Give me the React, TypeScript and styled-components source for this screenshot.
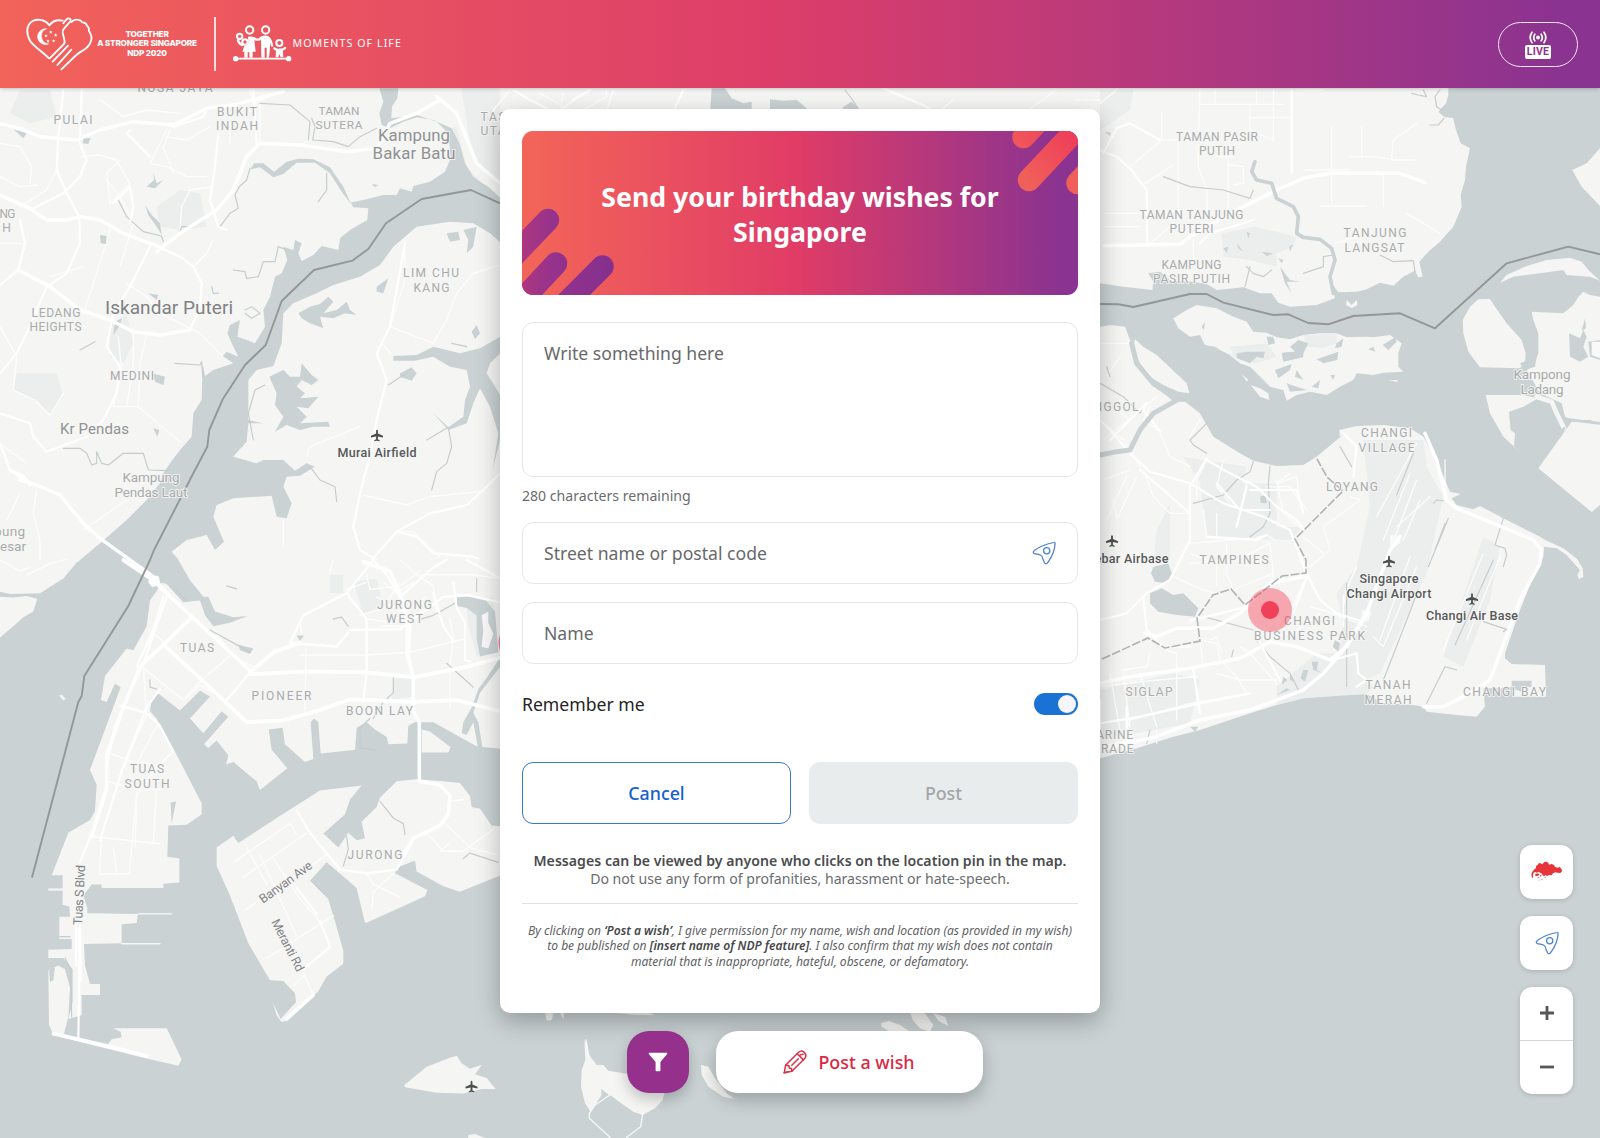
import React from "react";
import styled, { createGlobalStyle } from "styled-components";

const Global = createGlobalStyle`
  *, *::before, *::after { box-sizing: border-box; }
  body {
    margin: 0;
    font-family: "Noto Sans", "Open Sans", sans-serif;
    background: #cad2d3;
    overflow: hidden;
  }
  button, input, textarea { font: inherit; }
`;

/* ------------------------------------------------------------------ map */

type Sheet = {
  id: string;
  transform: string;
  land?: string[];
  park?: string[];
  water?: string[];
  stream?: string[];
  minor?: string[];
  medium?: string[];
  major?: string[];
  isle?: string[];
};

const sheets: Sheet[] = [
  {
    id: "johor-west",
    transform: "translate(0 80) scale(.33333)",
    land: ["0,0 1530,0 1530,1445 0,1445"],
    park: [
      "50,880 170,880 190,950 150,1005 110,960 40,930",
      "1380,0 1500,0 1500,320 1440,260 1410,190",
      "1330,150 1370,140 1400,260 1440,300 1390,280",
      "540,330 600,340 620,440 540,450 480,440 470,380",
      "330,740 380,700 400,790 370,850 330,830",
      "60,30 150,30 170,110 90,130 30,100",
    ],
    water: [
      "1510,362 1470,325 1420,290 1395,250 1378,190 1355,145 1300,120 1250,112 1210,125 1170,145 1145,135 1138,100 1150,65 1138,25 1195,25 1192,55 1176,80 1174,115 1200,112 1250,105 1310,125 1345,160 1352,235 1335,275 1290,305 1240,318 1235,335 1200,325 1190,345 1150,345 1100,358 1050,368 1025,335 990,280 945,248 890,248 850,282 820,292 780,262 752,268 762,250 790,250 822,275 860,245 895,236 940,238 990,262 1030,320 1050,365 1060,382 1105,385 1102,420 1050,450 1020,475 1015,510 965,498 940,525 905,543 895,520 905,490 885,480 880,510 850,500 862,540 845,580 825,590 810,650 790,690 795,740 765,790 740,780 712,770 720,720 690,735 682,760 700,800 715,830 680,815 668,828 700,850 640,870 615,888 608,850 605,960 580,1000 575,1070 540,1110 510,1150 490,1180 480,1210 440,1260 380,1320 300,1390 240,1440 235,1446 535,1446 545,1450 515,1415 560,1380 620,1365 645,1410 672,1385 640,1310 650,1275 700,1255 815,1247 830,1310 860,1315 875,1270 850,1220 860,1190 900,1187 945,1160 920,1150 885,1172 850,1140 790,1140 770,1150 700,1130 690,1140 740,1085 745,1030 790,1030 745,1020 745,900 770,870 820,858 845,790 850,700 880,670 950,640 1000,615 1080,590 1140,555 1180,500 1250,440 1350,425 1420,430 1470,460 1510,495",
      "895,700 930,680 960,672 985,650 1000,665 970,700 1010,690 1040,665 1050,690 1070,705 1035,700 1000,715 960,710 970,745 930,730 905,715",
      "808,890 850,870 870,890 900,890 905,850 935,885 955,900 935,915 905,900 890,920 915,940 900,955 955,950 925,985 890,980 920,1010 900,1030 985,1025 990,1040 940,1040 900,1050 860,1035 825,1055 850,1010 825,975 830,940",
      "1510,765 1440,805 1380,820 1300,800 1250,825 1180,828 1180,842 1245,842 1300,830 1350,860 1400,870 1410,920 1395,960 1390,1010 1345,1042 1300,1000 1345,1050 1400,1030 1420,970 1440,925 1470,980 1495,1060 1478,1170 1495,1100 1510,1030 1510,960 1460,880 1470,850 1510,810",
      "1200,880 1235,862 1250,880 1235,902 1200,890",
      "1430,735 1440,760 1425,778 1415,755",
      "1340,460 1375,455 1380,480 1350,485",
      "1390,450 1430,440 1420,500 1400,520 1405,480",
      "1130,620 1165,595 1150,640 1130,635",
      "640,1240 655,1230 650,1265 625,1270 610,1240 625,1245",
      "440,320 462,300 460,280 470,310 490,300 465,325",
      "435,375 455,405 480,430 485,465 470,440 445,405",
      "300,465 320,468 318,492 302,490",
      "445,640 475,645 470,660",
      "455,880 495,890 490,915 465,905",
      "40,148 80,160 70,175",
      "250,175 272,175 265,192 248,190",
      "345,725 365,715 360,735 340,765",
      "460,1045 478,1050 472,1070",
      "1115,312 1135,315 1125,322",
    ],
    stream: [
      "935,115 945,140 938,180 1000,185 1045,200 1080,170 1130,145",
      "355,360 380,410 430,455 485,468 490,485",
      "750,265 740,300 718,320 705,345 715,385 690,400 660,440",
      "860,510 835,500 825,545 790,545 775,590 740,595 735,575 700,570",
      "980,280 980,330 955,365",
      "780,70 870,75 930,125 925,180",
      "190,1105 240,1105 260,1120 275,1155 290,1150 290,1115 305,1150 325,1155 370,1120 430,1120 445,1170 500,1172",
      "525,850 600,855 605,845 608,890",
      "795,915 765,930 745,1000 760,1080",
      "1280,1080 1345,1042 1355,1100 1340,1150 1310,1175 1295,1230",
      "535,470 545,440 580,440",
      "1165,915 1210,885",
      "240,810 285,785",
      "735,690 755,680 780,700 755,715 735,700",
      "635,620 640,640 655,640",
      "930,1160 960,1200 1005,1220 1010,1265",
      "1355,790 1400,800",
    ],
    minor: [
      "0,290 60,320 110,315", "0,190 60,200 95,260 90,310", "170,270 140,330 60,380",
      "245,230 300,225 350,240 390,310 330,370 320,280 360,240", "320,300 360,350 400,430 360,560",
      "330,450 290,580 250,700", "100,960 40,930 50,830 0,740", "190,940 150,1005 110,965",
      "380,610 440,650 480,700 600,760 670,830", "400,760 400,850 380,980", "355,770 365,870 340,980",
      "440,760 420,850 415,980 540,1085", "340,980 415,980", "500,150 450,250 500,260 560,290 620,290",
      "510,150 490,200 520,280", "630,140 560,180 500,170", "780,70 780,190", "930,180 910,190", "690,130 690,190",
      "540,450 545,380 570,330 640,320", "580,560 620,520 640,480", "0,490 60,490", "150,590 250,560",
      "1215,480 1215,600 1170,740", "1500,555 1420,580 1370,640 1340,720 1300,790 1170,740",
      "1140,780 1170,820", "0,1090 80,1150", "110,1230 100,1300 120,1380 120,1440", "60,1240 20,1320",
      "1090,1245 1220,1275 1290,1250 1440,1235", "250,1350 380,1260", "920,1130 930,1100 1080,1040",
      "850,1320 850,1400", "1190,1355 1240,1355 1320,1430 1280,1445", "530,1410 610,1270",
      "750,30 760,70 850,30", "300,60 370,110 440,90 540,100",
    ],
    medium: [
      "190,30 175,170 170,270 200,340 238,410 240,490 200,580 140,620 80,760 50,820 0,880",
      "245,30 240,190 260,240 240,290 190,340 130,370 90,390", "60,420 75,490 55,570 0,615",
      "655,160 645,260 630,360 655,440 680,450", "760,30 770,190", "390,430 400,380 390,320 340,370",
      "450,500 390,620 340,700 320,800 360,860 350,940 310,1020 260,1070 140,1115 100,1070 90,1030 0,1000",
      "450,230 380,160 390,150", "570,750 600,680 605,610 580,560 540,530 450,490",
      "0,1090 30,1170 70,1200", "1215,490 1170,740 1130,820 1160,900 1130,1020 1110,1130 1080,1240 1060,1340 1080,1410 1130,1440",
      "1500,1180 1450,1230 1400,1275 1290,1300 1190,1355 1110,1445",
      "1190,1355 1250,1370 1300,1420 1420,1430 1500,1470", "620,90 610,110 520,140",
    ],
    major: [
      "0,130 60,145 120,170 230,180 300,150 400,125 520,135 620,85 700,75 850,35",
      "0,345 90,385 140,420 200,420 240,410 300,420 370,460 450,490 490,505",
      "470,515 540,460 650,390 700,330 740,230 780,190 900,195 1040,215 1130,205 1170,130 1250,100 1320,60",
      "55,570 150,620 240,690 330,720 400,755 480,765 570,750",
      "1310,50 1370,100 1410,200 1430,250 1500,310",
      "60,1200 110,1215 180,1245 250,1330 300,1375 460,1490",
      "30,1170 70,1190 90,1215",
    ],
  },
  {
    id: "tuas",
    transform: "translate(0 560) scale(.33333 .36862)",
    land: [
      "0,-2 238,-2 190,50 120,90 30,92 0,86",
      "0,100 40,102 80,98 112,105 100,140 70,155 40,180 0,210",
      "534,-2 570,55 610,100 625,100 645,140 700,155 742,152 690,170 640,180 615,150 600,110 575,112 550,115 500,65 482,62 470,85 450,110 440,180 400,245 380,240 315,315 303,380 320,385 345,335 362,345 270,570 290,610 285,680 270,705 205,740 155,855 188,855 188,935 208,940 210,968 178,968 178,1028 215,1028 215,1055 145,1057 145,1080 190,1080 218,1110 218,1200 205,1245 245,1235 245,1180 300,1180 300,1150 270,1150 255,1100 252,1042 365,1040 365,988 410,985 414,960 262,958 262,945 250,910 275,880 305,880 305,890 490,890 490,878 538,875 538,810 502,805 505,720 560,718 605,690 605,660 525,520 470,430 450,410 455,375 475,362 540,408 600,355 630,370 570,430 610,470 665,410 685,425 612,500 625,510 650,490 685,530 678,555 700,548 770,600 780,624 862,565 815,515 806,460 848,455 855,500 915,548 940,540 932,440 942,430 955,440 962,525 1065,515 1070,455 1100,440 1125,460 1160,480 1165,500 1222,498 1225,450 1245,440 1300,440 1430,505 1530,515 1530,-2",
      "1265,460 1290,465 1352,508 1345,522 1265,522",
      "145,1112 175,1100 195,1110 210,1160 205,1240 190,1292 160,1288 147,1260",
      "650,780 700,748 715,768 830,700 960,625 1085,612 1050,650 1035,690 970,742 1015,780 1045,740 1070,760 1095,755 1085,710 1130,670 1140,645 1190,600 1250,595 1330,600 1380,605 1410,640 1415,670 1440,675 1475,720 1530,725 1530,845 1380,900 1330,885 1250,845 1245,815 1190,835 1185,850 1282,895 1275,912 1105,982 1095,985 1070,890 980,820 930,870 985,920 1005,980 1030,1060 1030,1095 980,1130 955,1170 860,1250 845,1253 830,1235 818,1200 842,1245 888,1200 885,1175 850,1142 810,1140 745,1040 690,910 650,830",
      "150,1285 235,1300 320,1318 335,1300 365,1295 362,1280 340,1270 500,1270 545,1355 535,1372 430,1350 235,1306",
      "1212,1425 1280,1375 1350,1350 1370,1345 1385,1365 1410,1380 1445,1370 1425,1395 1460,1405 1487,1435 1445,1435 1390,1447 1310,1445 1215,1430",
      "178,368 185,365 197,377 190,381",
      "1405,1560 1425,1557 1455,1568 1405,1568",
      "145,891 190,891 190,897 145,897",
    ],
    park: [
      "1400,130 1480,100 1495,250 1430,260 1405,180",
      "1180,320 1235,320 1240,370 1175,380",
      "1060,60 1130,50 1150,130 1090,150",
      "990,40 1030,40 1030,90 990,90",
    ],
    water: [
      "1370,102 1410,98 1450,102 1485,140 1495,250 1440,262 1430,215 1430,150 1400,130 1370,125",
      "1500,265 1460,320 1435,350 1415,400 1390,440 1385,470 1400,475 1420,440 1435,515 1448,512 1435,440 1420,415 1440,360 1500,290",
      "1082,455 1100,450 1128,480 1128,522 1090,522",
      "512,658 528,655 515,715",
      "890,205 912,205 900,220",
      "715,230 760,240 750,255 720,245",
      "1240,442 1250,442 1250,520 1226,520 1226,450",
      "195,1270 230,1245 232,1295 200,1288",
      "147,1110 165,1105 160,1140 150,1145",
    ],
    isle: ["1445,150 1465,140 1465,170 1480,200 1465,240 1445,235 1450,190"],
    stream: [
      "1265,160 1300,150 1370,115", "1180,320 1180,360 1150,385 1120,430", "1430,50 1430,85",
      "520,75 560,110", "630,190 700,225 750,250", "680,70 710,78", "1140,655 1180,700 1210,715 1215,745",
      "1390,810 1410,795 1495,820", "1340,280 1420,345", "450,325 450,345 470,350", "195,1080 212,1110 215,1240",
      "1000,160 1025,155 1045,180", "1040,750 1045,785 1030,830",
      "1110,430 1080,455 1080,510 1130,515",
      "180,1022 210,1022",
    ],
    minor: [
      "415,960 515,960", "365,1041 480,1041",
      "900,258 1100,258 1230,250 1390,215", "918,240 915,420", "575,155 500,225", "690,260 600,330 550,380", "640,190 700,260 760,290",
      "420,285 550,380 600,340 660,370", "450,190 500,230", "330,525 390,545 500,560", "520,520 460,570",
      "305,750 298,852 388,852 410,630", "470,620 460,765", "275,750 480,770", "320,600 420,625 490,620",
      "430,290 440,420 400,500 350,610", "470,450 430,520 400,570",
      "700,820 870,715 890,745", "730,860 920,740", "780,800 890,1020", "800,1080 1000,965", "820,810 900,920 960,980 990,1040",
      "735,950 800,910 980,800", "740,780 800,880", "910,1120 940,1180", "880,1155 910,1130", "1100,850 1120,880 1200,915", "1180,850 1120,900 1115,950",
      "1280,740 1330,790 1390,790 1480,730", "1330,710 1410,780 1490,800", "1350,655 1390,650", "1320,790 1345,770",
      "1100,40 1110,80 1200,70 1260,30", "1130,100 1200,140 1280,100", "1200,0 1250,40 1300,70 1310,150", "1140,180 1220,180 1230,120",
      "1350,160 1360,210 1350,290 1350,400", "1080,150 1150,130 1200,60", "1040,80 1100,60", "1150,60 1190,90 1240,60", "1100,160 1180,170 1220,130", "1260,40 1330,40 1420,40 1500,50",
      "905,200 900,170", "1000,0 990,30", "480,550 410,640 405,780", "340,780 350,850",
      "80,40 150,10 200,-2", "0,0 60,30 90,20",
    ],
    medium: [
      "1120,0 1040,90 910,150 870,225 1010,235 1050,190 1200,188 1330,100 1400,95 1500,115",
      "1040,90 1100,160 1100,300 1090,385", "1120,0 1160,40 1220,130 1220,260 1240,320",
      "755,300 680,380", "500,100 430,280 345,450 320,560 320,610 280,730 240,820",
      "480,350 440,400 370,560 300,760", "1360,60 1370,130 1395,170 1395,270 1410,275",
      "360,395 440,415 480,450 520,520", "890,680 930,740 1020,840 1100,850 1190,840 1240,760",
      "490,100 460,190 410,290", "1200,100 1300,20 1340,0", "960,980 990,1050 910,1110",
      "890,890 950,960", "1400,0 1500,50", "1300,90 1330,180 1360,220",
      "240,990 235,1300", "228,990 228,1100",
    ],
    major: [
      "370,0 460,55 500,90 750,300", "750,305 820,250 900,225",
      "490,230 600,320 740,440 850,435 950,410 1050,378 1240,385 1370,380 1500,410",
      "750,310 920,302 1100,305 1240,318 1400,290 1500,265",
      "1240,320 1240,410 1258,440 1258,600 1320,610 1350,640 1345,690 1320,720 1240,755 1200,810",
      "490,230 420,290 370,400 320,530 320,620 275,750",
      "238,1000 240,1140", "570,160 490,230", "160,1285 320,1318 440,1345", "860,1245 940,1180",
      "1090,5 1170,30 1200,90 1230,180 1225,260 1240,320",
      "452,48 472,48 475,62 458,68 450,58",
    ],
  },
  {
    id: "johor-east",
    transform: "translate(1090 80) scale(.33333)",
    land: [
      "-1770,0 1075,0 1075,45 1068,70 1045,95 1062,110 1090,115 1098,150 1112,190 1140,205 1128,260 1125,300 1112,345 1115,380 1090,440 1050,485 1015,515 988,545 998,590 985,592 975,572 940,590 910,617 870,608 830,628 800,635 745,637 725,610 735,655 680,675 600,680 565,668 545,640 510,640 460,622 380,630 350,612 310,605 190,600 187,630 100,620 30,610 -30,605 -1770,600",
      "250,715 290,690 320,675 380,685 430,710 470,725 490,755 530,758 560,772 600,778 640,765 690,760 740,760 770,772 830,770 850,772 900,765 935,790 925,820 925,860 940,875 880,878 850,885 800,880 790,900 750,920 710,945 660,935 620,945 590,962 580,930 540,920 500,880 480,860 450,850 420,825 390,810 375,800 345,795 330,765 300,770 265,745",
      "482,915 510,925 535,940 538,960 510,950",
      "455,882 475,900 470,905", "895,900 920,900 925,907",
      "770,660 785,675 800,660 802,675 785,684 768,675",
      "1165,658 1200,657 1215,680 1250,730 1295,780 1307,820 1305,850 1290,865 1170,862 1135,815 1120,760 1118,720 1140,680",
      "1325,695 1420,700 1450,675 1465,650 1480,635 1500,645 1530,650 1530,1030 1500,1020 1450,1020 1425,1010 1415,970 1350,940 1310,870 1330,860 1345,820 1345,760 1330,720",
      "1230,608 1250,585 1310,558 1370,540 1440,533 1475,545 1495,570 1530,602 1500,590 1430,585 1420,570 1350,580 1270,590",
      "1530,205 1490,250 1447,270 1475,320 1530,378",
      "1187,945 1300,945 1345,955 1300,980 1257,995 1262,1050 1275,1060 1272,1100 1300,1125 1240,1070 1200,1000",
    ],
    park: [
      "395,460 495,440 620,470 610,500 560,520 560,560 480,540 400,530",
      "640,765 740,762 740,790 700,805 650,800",
      "420,800 530,790 560,830 500,850 430,830",
      "30,30 130,30 120,90 30,150",
    ],
    water: [
      "440,820 470,815 525,815 520,835 500,830 480,850 440,835",
      "530,770 550,770 555,790 535,795", "575,818 640,812 640,832 580,845",
      "680,838 745,815 742,840 700,850", "555,870 605,852 600,870 565,895",
      "878,795 915,772 920,785 895,810", "835,808 850,800 855,815", "665,920 690,900 685,925",
      "720,885 735,885 730,900", "600,800 625,780 655,790 640,820 615,815",
      "740,790 760,775 755,800 735,805", "335,740 345,725 342,750",
      "590,910 620,920 650,930 600,935", "620,870 640,900 615,890",
      "1437,760 1470,775 1480,750 1490,770 1480,800 1495,830 1470,845 1440,830",
      "1485,715 1488,745 1475,752", "1495,785 1530,780 1530,840 1500,830", "1290,850 1340,830 1335,860 1300,870",
      "470,455 480,460 475,475", "440,490 460,515 445,505", "515,515 550,520 530,528", "565,535 580,540 575,550",
      "570,560 600,600 630,605 590,605 605,640 585,610", "400,505 415,500 410,518", "610,492 600,515 598,500",
      "45,155 62,158 60,168", "175,580 210,575 240,600 190,605",
      "-1135,25 -1095,25 -1075,55 -1040,70 -1015,65 -1015,100 -1140,100",
      "-960,58 -920,62 -880,60 -850,85 -850,100 -960,100",
      "-740,80 -715,65 -690,90 -690,100 -750,100",
    ],
    isle: ["1505,785 1530,785 1530,835 1505,825"],
    stream: [
      "965,40 985,45 1010,50 1000,30", "1050,30 1035,50 1040,80 1055,90",
      "1020,135 1045,135 1062,115", "470,560 490,580 520,590 545,570", "480,560 465,620",
      "730,525 700,530 700,560 640,580", "490,330 480,355 400,330 300,320 220,290", "870,525 910,545 970,542 975,575",
      "-735,30 -712,60 -690,95",
    ],
    minor: [
      "330,30 325,180 325,260 350,330 352,390", "330,73 580,73", "375,30 375,73", "480,73 480,150 550,180", "550,30 550,180", "480,113 600,113",
      "265,190 265,390", "210,180 360,180", "415,200 415,400", "380,230 430,230 430,190", "500,30 500,73",
      "645,270 780,270", "725,140 725,370", "780,230 860,230 910,240 975,240", "905,240 910,180 980,130", "690,378 830,378", "880,280 880,380", "815,140 815,230",
      "45,400 160,400 280,390", "45,440 150,440", "215,100 215,180 120,260", "165,310 250,255", "310,480 310,540",
      "180,490 240,440 370,440", "950,400 1050,460", "735,490 800,470", "420,255 460,260 460,310 430,315",
      "30,70 80,30", "620,30 700,30", "-1650,40 -1560,90", "-1580,40 -1590,100", "-1790,90 -1740,30",
      "-1430,30 -1450,90", "-460,100 -410,60", "-200,100 -100,30", "-50,60 30,60", "-1530,95 -1450,50 -1450,30",
    ],
    medium: [
      "30,210 80,230 120,265 170,330 172,490", "80,145 120,130 210,180", "40,220 80,145",
      "605,30 605,280", "330,490 360,460 490,420", "-1730,30 -1680,60 -1600,100 -1550,60 -1500,30",
      "-630,20 -480,85", "-1250,95 -1220,30",
    ],
    major: [
      "42,497 270,493 300,470 370,430 480,370 560,330 640,295 720,280 930,280 1005,308",
    ],
  },
  {
    id: "changi",
    transform: "translate(1090 440) scale(.33333)",
    land: [
      "-30,-330 30,-340 60,-345 105,-340 120,-300 130,-250 180,-180 235,-130 250,-115 285,-115 330,-80 350,-45 370,-10 450,40 490,62 560,78 640,75 680,50 740,0 765,-20 750,-10 748,-30 800,-42 880,-45 960,-35 1000,-10 1040,60 1065,120 1080,155 1112,162 1085,175 1100,195 1150,208 1170,198 1250,240 1350,290 1370,302 1420,325 1462,358 1478,385 1480,410 1467,418 1462,405 1470,390 1430,345 1400,325 1362,320 1360,350 1330,410 1290,510 1245,640 1245,655 1265,672 1365,675 1368,770 1270,770 1265,740 1235,745 1180,745 1185,800 1160,830 1100,825 1010,815 1000,800 970,795 880,790 830,762 730,765 640,775 560,795 480,820 330,870 250,890 140,925 30,955 -30,965",
      "135,-302 160,-280 200,-255 290,-170 298,-140 265,-145 220,-165 180,-190 150,-230 128,-270",
      "1445,-55 1530,-55 1530,195 1505,216 1345,85",
      "1250,-5 1300,45 1275,20 1255,0",
    ],
    park: [
      "820,0 1000,0 1010,80 1060,170 1010,400 870,700 780,740 740,660 760,560 740,460 800,380 840,200",
      "560,740 680,640 780,640 850,740 830,762 640,775 560,795",
      "1180,290 1230,320 1200,480 1120,680 1060,650",
      "200,270 240,190 240,360 190,370",
      "280,50 470,80 440,180 520,230 520,280 440,290",
      "30,750 250,700 330,720 300,850 30,900",
      "330,130 560,130 560,260 640,260 600,300 350,290",
    ],
    water: [
      "190,380 235,370 245,400 230,430 195,425 183,400",
      "180,460 215,445 250,465 280,460 325,505 315,530 260,525 205,515 180,490",
      "1265,722 1325,722 1325,740 1300,742 1295,755 1265,745",
      "510,170 528,165 530,190 512,188", "735,600 750,610 745,635 728,620",
      "300,860 325,860 315,875",
      "600,700 612,725 600,720", "640,690 655,690 645,725 632,715", "665,665 685,665 680,690 700,700 670,690",
      "560,765 590,745 600,750", "580,710 592,720 575,735",
    ],
    stream: [
      "490,65 480,95 440,120 400,165 310,190", "540,78 535,130 540,220 520,260 480,290",
      "1240,235 1215,315 1245,325 1250,345 1240,380", "1075,235 1015,380", "1065,250 1035,330", "1030,190 1040,180 1060,182",
      "880,720 900,670 985,450", "1100,690 1065,680 1060,690 1010,790", "1210,360 1095,615", "970,40 920,165",
      "1180,545 1250,568 1240,575", "750,20 785,80", "500,600 540,650 600,700 625,750", "340,530 490,570",
      "350,-50 300,0 310,15 350,40", "30,-170 100,-130 150,-80 160,-100", "50,-220 60,-190",
      "770,430 770,740", "180,870 170,910", "430,630 425,650",
    ],
    minor: [
      "160,90 190,170 240,220 300,220", "210,-20 240,50 300,80", "350,60 320,120 320,180", "560,120 580,220 640,270", "530,140 600,140 640,200",
      "400,60 380,140 420,190", "470,130 440,260", "340,210 350,290", "380,220 380,290", "410,310 410,400 430,450", "440,360 540,310 550,400 430,450",
      "300,310 420,300 490,295 530,285 555,300", "300,340 380,370 380,440", "250,410 340,450 375,460", "550,400 540,460", "300,370 410,360",
      "620,360 660,380 720,330 700,260 810,180 780,170", "640,290 700,340", "560,130 620,110 630,180 650,210", "600,100 560,130",
      "40,120 120,90", "50,240 110,110", "80,240 140,110", "70,180 80,230", "180,640 170,680 100,690", "230,630 260,640 260,840",
      "340,690 330,600 380,610 390,660", "30,740 200,720 320,710", "60,700 90,870", "100,700 120,860", "150,700 200,860", "400,670 440,710 470,760", "380,700 450,720 560,720",
      "200,870 200,910", "100,900 120,840 300,790 470,760", "450,620 480,640 560,730", "540,600 620,570 690,520",
      "590,540 640,430", "660,500 730,520 830,560", "800,380 760,470 760,560", "860,230 980,10", "880,300 960,100", "980,120 900,330",
      "960,350 870,600", "850,590 880,620 980,380", "990,180 940,300", "1180,340 1060,630", "1230,350 1130,600",
      "1020,170 920,260", "30,-60 100,0 150,80", "30,-290 130,-290", "90,-250 50,-190", "200,-130 40,0", "120,-60 60,-110",
      "330,-60 300,-10", "180,-100 160,-60 190,-40",
      "360,600 380,590 395,640", "760,500 770,450", "1065,60 1065,150",
    ],
    medium: [
      "0,-90 60,-30 130,50 180,95 300,130 400,190 520,230 600,270 650,400 690,480 740,520 820,545",
      "350,55 300,140 300,300 240,420 170,460 110,520 30,540", "160,470 170,570 220,620 300,620",
      "350,60 420,100 500,140 560,200 620,240 640,265", "210,-25 160,-90 170,-110 60,0", "650,410 610,520",
      "30,850 150,830 330,790 480,760", "310,690 330,820", "30,780 30,920 140,900", "110,800 110,900", "150,90 220,150 300,220",
      "380,130 450,210 540,210", "500,590 570,720", "470,140 440,260", "790,110 800,20 760,-20", "350,290 500,300 530,285",
      "730,660 800,640 805,700 830,720 800,740", "480,150 620,150 640,220", "300,540 350,530 470,500",
    ],
    major: [
      "30,730 120,710 300,685 450,655 540,605 620,620 720,660 770,620 830,520",
      "30,930 200,890 330,840 480,810 640,750 700,700 760,630 830,520 900,330 930,290",
      "1005,-20 1040,60 1070,180 1100,205 1330,300 1355,330 1350,370 1290,480 1230,640 1200,720 1120,770 1060,800 1000,800",
      "165,580 200,590 260,565 370,565 450,520 540,430 640,410",
    ],
    isle: ["900,285 935,290 930,310 900,330", "815,510 845,515 835,545 815,540"],
  },
  {
    id: "southern-isles",
    transform: "translate(500 1000) scale(.33333)",
    land: [
      "253,120 262,135 268,165 290,195 310,195 325,212 385,222 495,270 488,300 465,325 428,345 400,335 350,300 303,262 305,285 272,335 255,310 243,260 245,210 256,180",
      "603,195 625,200 645,235 680,280 702,297 670,290 625,260 605,225",
      "1143,70 1165,62 1200,75 1230,95 1170,95 1145,80", "1230,35 1275,40 1300,75 1290,95 1260,85 1238,60", "1300,40 1335,50 1345,78 1315,62",
      "135,38 160,40 155,60 140,62", "180,38 192,38 190,58", "320,36 440,36 465,46 400,44",
    ],
    minor: ["258,120 265,170", "330,285 285,315 268,340 268,355 330,412", "428,340 422,380 380,412", "300,262 330,285"],
  },
];

const MapCanvas = styled.svg`
  position: absolute;
  inset: 0;
  width: 1600px;
  height: 1138px;
  display: block;
`;

const MapText = styled.text<{ $size: number; $tone: string; $weight?: number }>`
  font-family: Roboto, "Noto Sans", sans-serif;
  font-size: ${(p) => p.$size}px;
  font-weight: ${(p) => p.$weight ?? 400};
  fill: ${(p) => p.$tone};
  stroke: rgba(246, 246, 244, 0.85);
  stroke-width: 2px;
  stroke-linejoin: round;
  paint-order: stroke;
  text-anchor: middle;
`;

const tone = { area: "#a9abac", town: "#909294", city: "#7f8183", air: "#57595a", road: "#828486" };

type Label = [string, number, number, number, number, string, number?];
const labels: Label[] = [
  ["NUSA JAYA", 175, 87.5, 75, 12, tone.area],
  ["PULAI", 73, 120, 39, 12, tone.area],
  ["BUKIT", 237, 112, 40, 12, tone.area],
  ["INDAH", 237, 126, 42, 12, tone.area],
  ["TAMAN", 339, 110.5, 41, 11.8, tone.area],
  ["SUTERA", 339, 124.5, 47, 11.8, tone.area],
  ["TASEK", 502, 116.5, 43, 12, tone.area],
  ["UTARA", 502, 130.5, 43, 12, tone.area],
  ["Kampung", 414, 135, 72, 16.8, tone.town],
  ["Bakar Batu", 414, 153.5, 83, 16.8, tone.town],
  ["LIM CHU", 431, 273, 56, 12, tone.area],
  ["KANG", 431.5, 287.5, 36, 12, tone.area],
  ["Iskandar Puteri", 169, 307.5, 128, 19, tone.city],
  ["LEDANG", 56, 313, 49, 12, tone.area],
  ["HEIGHTS", 55.5, 327, 52, 12, tone.area],
  ["NG", 7.5, 214, 16, 12, tone.area],
  ["H", 6.5, 228, 8, 12, tone.area],
  ["MEDINI", 132, 376, 44, 12, tone.area],
  ["Kr Pendas", 94.5, 429, 69, 15, tone.town],
  ["Kampung", 151, 477.5, 57, 13.5, tone.area],
  ["Pendas Laut", 151, 492.5, 73, 13.5, tone.area],
  ["pung", 9.500, 531.5, 31, 13.5, tone.area],
  ["esar", 13, 546, 26, 13.5, tone.area],
  ["Murai Airfield", 377, 452.5, 79, 12.5, tone.air, 500],
  ["JURONG", 404.5, 605, 55, 12, tone.area],
  ["WEST", 404.5, 619, 37, 12, tone.area],
  ["TUAS", 197, 648, 34, 12, tone.area],
  ["PIONEER", 281.5, 696, 60, 12, tone.area],
  ["BOON LAY", 379.5, 711, 67, 12, tone.area],
  ["TUAS", 147, 769, 34, 12, tone.area],
  ["SOUTH", 147, 783.5, 45, 12, tone.area],
  ["JURONG", 375, 855, 55, 12, tone.area],
  ["TAMAN PASIR", 1217, 137, 82, 12, tone.area],
  ["PUTIH", 1217, 151, 36, 12, tone.area],
  ["TAMAN TANJUNG", 1191.5, 215, 104, 12, tone.area],
  ["PUTERI", 1191.5, 229, 44, 12, tone.area],
  ["KAMPUNG", 1191.5, 264.5, 60, 12, tone.area],
  ["PASIR PUTIH", 1191.5, 278.5, 77, 12, tone.area],
  ["TANJUNG", 1375, 233, 63, 12, tone.area],
  ["LANGSAT", 1374.5, 247.5, 60, 12, tone.area],
  ["Kampong", 1542, 374.5, 57, 13.5, tone.area],
  ["Ladang", 1542, 389.5, 43, 13.5, tone.area],
  ["PUNGGOL", 1107, 407, 63, 12, tone.area],
  ["CHANGI", 1386.5, 433, 51, 12, tone.area],
  ["VILLAGE", 1386.5, 447.5, 56, 12, tone.area],
  ["LOYANG", 1352, 487, 52, 12, tone.area],
  ["TAMPINES", 1234, 559.5, 69, 12, tone.area],
  ["Paya Lebar Airbase", 1112, 558.5, 113, 12.5, tone.air, 500],
  ["Singapore", 1389, 579, 59, 12.5, tone.air, 500],
  ["Changi Airport", 1389, 593.5, 85, 12.5, tone.air, 500],
  ["Changi Air Base", 1472, 615.5, 92, 12.5, tone.air, 500],
  ["CHANGI", 1309.5, 621, 51, 12, tone.area],
  ["BUSINESS PARK", 1309.5, 635.5, 111, 12, tone.area],
  ["SIGLAP", 1149, 692, 47, 12, tone.area],
  ["TANAH", 1388, 685, 45, 12, tone.area],
  ["MERAH", 1388, 699.5, 47, 12, tone.area],
  ["CHANGI BAY", 1504.5, 692, 83, 12, tone.area],
  ["MARINE", 1109, 734.5, 48, 12, tone.area],
  ["PARADE", 1109, 749, 49, 12, tone.area],
];

const streets: [string, number, number, number, number][] = [
  ["Banyan Ave", 285.5, 882, 62, -36],
  ["Meranti Rd", 288, 945, 57, 63],
  ["Tuas S Blvd", 79, 895, 60, -87],
];

const airfields: [number, number][] = [[377, 435.5], [1112, 541], [1389, 561.5], [1472, 599], [471.5, 1086.5]];

const Lines = ({ pts, color, w, o = 1 }: { pts?: string[]; color: string; w: number; o?: number }) => (
  <g fill="none" stroke={color} strokeWidth={w} strokeLinejoin="round" strokeLinecap="round" opacity={o}>
    {pts?.map((p) => <polyline key={p} points={p} />)}
  </g>
);

const Shapes = ({ pts, color }: { pts?: string[]; color: string }) => (
  <g fill={color}>{pts?.map((p) => <polygon key={p} points={p} />)}</g>
);

const BaseMap = () => (
  <MapCanvas viewBox="0 0 1600 1138">
    {sheets.map((s) => (
      <g key={s.id} transform={s.transform}>
        <Shapes pts={s.land} color="#f5f6f4" />
        <Shapes pts={s.park} color="#eceeee" />
        <Lines pts={s.minor} color="#fff" w={4} o={0.85} />
        <Shapes pts={s.water} color="#cad2d3" />
        <Lines pts={s.stream} color="#c6cccd" w={3.5} />
        <Shapes pts={s.isle} color="#f8f9f8" />
        <Lines pts={s.medium} color="#fff" w={6.5} />
        <Lines pts={s.major} color="#fff" w={10.5} />
      </g>
    ))}
    <g transform="translate(1090 80) scale(.33333)">
      <Lines pts={["495,245 485,275 500,300 545,310 560,355 610,380 625,410 620,460 640,472 690,478 725,505 735,540 720,590 730,640"]} color="#cad2d3" w={11} />
      <Lines pts={["125,790 140,850 190,910 240,945 290,950", "270,955 190,1000 150,1050 120,1110 80,1115 30,1125"]} color="#cad2d3" w={15} />
      <Lines pts={["1340,950 1385,965 1400,1000 1422,1045"]} color="#f5f6f4" w={14} />
      <Lines pts={["1422,1045 1370,1110", "1430,1018 1530,1030"]} color="#cad2d3" w={8} />
    </g>
    <g fill="none" stroke="#949798" strokeWidth="1.900" strokeLinejoin="round">
      <polyline points="500,203.3 471,190 421.7,199 386,223.3 368.3,249 352.3,260.7 314,270 281.7,301 265.7,345 245,365 222.7,399.3 209.3,430 207.3,446.7 193.3,473.3 154,550 150,560 128.3,606 84.3,676 81.7,696 78.3,702 32,877.5" />
      <polyline points="1100,304 1118.3,304.3 1133.3,307 1190,294 1206.7,294 1223.3,302.7 1273.3,315 1288.3,314.3 1308.3,323 1328.3,324.3 1353.3,316 1400,313.3 1435,328.3 1506.7,263.3 1568.3,246.7 1600,254.3" />
    </g>
    <polyline
      fill="none" stroke="#b0b3b4" strokeWidth="1.600" strokeDasharray="9 2"
      points="1102,659 1148,638 1165,648 1200,641 1197,618 1213,595 1231,589 1245,605 1282,576 1306,573 1306,560 1295,539 1343,491 1327,477 1317,459"
    />
    {labels.map(([t, x, y, w, size, color, weight]) => (
      <MapText key={t + x + y} x={x} y={y + size * 0.355} textLength={w} $size={size} $tone={color} $weight={weight}>{t}</MapText>
    ))}
    {streets.map(([t, x, y, w, a]) => (
      <MapText key={t} x={0} y={4.5} textLength={w} transform={`translate(${x} ${y}) rotate(${a})`} $size={12.5} $tone={tone.road}>{t}</MapText>
    ))}
    {airfields.map(([x, y]) => (
      <path
        key={x}
        transform={`translate(${x} ${y})`}
        fill="#4c4e4f"
        d="M-.9-5Q0-6.600.9-5V-1.900L6 .3V1.900L.9.9V3.700L2.800 5V5.800L0 5.200-2.800 5.800V5L-.9 3.700V.9L-6 1.900V.3L-.9-1.900Z"
      />
    ))}
    <circle cx="520.500" cy="643" r="22" fill="#f04058" opacity=".6" />
    <circle cx="1270" cy="610" r="22" fill="#f5364f" opacity=".42" />
    <circle cx="1270" cy="610" r="9" fill="#f0405a" />
  </MapCanvas>
);

/* --------------------------------------------------------------- chrome */

const Page = styled.div`
  position: relative;
  width: 1600px;
  height: 1138px;
  overflow: hidden;
  display: flex;
  flex-direction: column;
`;

const Header = styled.header`
  position: relative;
  z-index: 1;
  flex: none;
  height: 88px;
  padding: 0 22px 0 25px;
  display: flex;
  align-items: center;
  color: #fff;
  background: linear-gradient(90deg, #f2635a 0%, #dd3e69 48%, #8a3391 98%);
  box-shadow: 0 1px 4px rgba(0, 0, 0, 0.22);
`;

const NdpText = styled.div`
  width: 102px;
  margin-left: 1px;
  font: 800 8.2px/9.2px Inter, "Open Sans", sans-serif;
  letter-spacing: -0.2px;
  text-align: center;
  white-space: nowrap;
`;

const HeaderRule = styled.div`
  width: 1.5px;
  height: 54px;
  margin: 0 17px 0 16px;
  background: rgba(255, 255, 255, 0.8);
`;

const MolText = styled.div`
  margin: -2px 0 0 0;
  font: 400 10.6px/14px "Noto Sans", sans-serif;
  letter-spacing: 1.1px;
  white-space: nowrap;
`;

const LiveButton = styled.button`
  margin-left: auto;
  width: 80px;
  height: 45px;
  padding: 1px 0 0;
  display: flex;
  flex-direction: column;
  align-items: center;
  justify-content: center;
  border: 1.5px solid #fbe6f5;
  border-radius: 23px;
  background: transparent;
  color: #fff;
`;

const LiveTag = styled.span`
  width: 26px;
  height: 14px;
  border-radius: 2px;
  background: #fff;
  color: #8f328e;
  font: 700 10.5px/14px Roboto, sans-serif;
  letter-spacing: 0.2px;
  text-align: center;
`;

const Dialog = styled.section`
  position: relative;
  align-self: center;
  flex: none;
  width: 600px;
  height: 904px;
  margin-top: 21px;
  padding: 22px 22px 0;
  display: flex;
  flex-direction: column;
  border-radius: 10px;
  background: #fff;
  box-shadow: 0 8px 24px rgba(0, 0, 0, 0.28);
`;

const Banner = styled.div`
  position: relative;
  height: 164px;
  display: grid;
  place-items: center;
  overflow: hidden;
  border-radius: 11px;
  background: linear-gradient(90deg, #f26359 3%, #e13c66 49%, #8a3391 97%);
`;

const BannerArt = styled.svg`
  position: absolute;
  inset: 0;
`;

const Title = styled.h1`
  position: relative;
  margin: 0;
  padding-top: 2px;
  width: 430px;
  color: #fff;
  font-size: 26.7px;
  font-weight: 700;
  line-height: 35.5px;
  text-align: center;
`;

const Field = styled.label<{ $height: number; $top: number }>`
  height: ${(p) => p.$height}px;
  margin-top: ${(p) => p.$top}px;
  padding: ${(p) => (p.$height > 100 ? "17px" : "0")} 21px 0;
  display: flex;
  align-items: ${(p) => (p.$height > 100 ? "flex-start" : "center")};
  justify-content: space-between;
  border: 1px solid #e6e7e8;
  border-radius: 11px;
  color: #67696b;
  font-size: 17.6px;
  line-height: 26px;
`;

const Counter = styled.div`
  margin-top: 8px;
  color: #6a6c6e;
  font-size: 14.1px;
  line-height: 21px;
`;

const RememberRow = styled.div`
  height: 22px;
  margin-top: 29px;
  display: flex;
  align-items: center;
  justify-content: space-between;
  color: #242526;
  font-size: 17.6px;
`;

const Toggle = styled.span`
  width: 44px;
  height: 22px;
  padding: 2px;
  display: flex;
  justify-content: flex-end;
  border-radius: 11px;
  background: #1a73d4;
  &::after {
    content: "";
    width: 18px;
    height: 18px;
    border-radius: 50%;
    background: #f6f5fb;
  }
`;

const Actions = styled.div`
  margin-top: 47px;
  display: grid;
  grid-template-columns: 1fr 1fr;
  gap: 18px;
`;

const Action = styled.button<{ $muted?: boolean }>`
  height: 62px;
  border: 1px solid ${(p) => (p.$muted ? "#e9ecec" : "#3c76cc")};
  border-radius: 11px;
  background: ${(p) => (p.$muted ? "#e9ecec" : "#fff")};
  color: ${(p) => (p.$muted ? "#a3a6a8" : "#1560cf")};
  font-size: 17.8px;
  font-weight: 500;
`;

const Notice = styled.p`
  margin: 28px 0 0;
  padding-bottom: 15px;
  border-bottom: 1px solid #dfe1e2;
  color: #6a6c6e;
  font-size: 14.1px;
  line-height: 18px;
  text-align: center;
  white-space: nowrap;
  strong { font-weight: 560; letter-spacing: 0.03px; color: #4a4c4e; }
`;

const Terms = styled.p`
  margin: 18.5px -4px 0;
  color: #606264;
  font-size: 12.06px;
  font-style: italic;
  line-height: 15.7px;
  text-align: center;
  white-space: nowrap;
  strong { font-weight: 600; color: #454749; }
`;

const BottomBar = styled.div`
  position: relative;
  margin: 18px 0 0 627px;
  display: flex;
  gap: 26.5px;
`;

const FilterButton = styled.button`
  width: 62px;
  height: 62px;
  padding: 0;
  display: grid;
  place-items: center;
  border: 0;
  border-radius: 22px;
  background: #95318c;
  box-shadow: 0 6px 14px rgba(0, 0, 0, 0.22);
`;

const WishButton = styled.button`
  width: 267px;
  height: 62px;
  padding: 0;
  display: flex;
  align-items: center;
  justify-content: center;
  gap: 11px;
  border: 0;
  border-radius: 22px;
  background: #fff;
  color: #dc2743;
  font-size: 17.9px;
  font-weight: 500;
  box-shadow: 0 7px 18px rgba(0, 0, 0, 0.24);
`;

const MapControls = styled.div`
  position: absolute;
  right: 27px;
  bottom: 44px;
  display: flex;
  flex-direction: column;
  gap: 17.5px;
`;

const ControlCard = styled.div`
  width: 53px;
  border-radius: 12px;
  background: #fff;
  box-shadow: 0 1px 5px rgba(0, 0, 0, 0.16);
`;

const ControlButton = styled.button<{ $ruled?: boolean }>`
  width: 53px;
  height: 53.5px;
  padding: 0;
  display: grid;
  place-items: center;
  border: 0;
  border-bottom: ${(p) => (p.$ruled ? "1px solid #d2d5d6" : "0")};
  background: transparent;
`;

/* ---------------------------------------------------------------- icons */

const HeartLogo = () => (
  <svg width="70" height="60" viewBox="75 44 210 180" fill="none" stroke="#fff" strokeWidth="5.500" strokeLinecap="round" strokeLinejoin="round">
    <path d="M188 64C170 60 157 66 148 78C137 62 115 57 98 65C78 76 78 104 90 124C100 140 128 158 146 176Q148 178 152 174L190 136Q196 130 193 121L188 100Q186 94 192 88L211 66Q214 58 206 57Q201 56 190 72" />
    <path d="M214 68Q224 58 236 62Q244 63 246 69Q258 68 261 79Q268 85 267 95Q277 111 274 122C270 137 262 146 249 153Q238 159 229 167L184 210" />
    <path d="M204 139L158 187M214 151L172 197" />
    <path d="M139 88A24 24 0 1 0 146 134A24 24 0 0 1 139 88Z" fill="#fff" strokeWidth="1.500" />
    <g fill="#fff" stroke="none">
      <path d="M152 93l1.500 3.400 3.800.3-2.900 2.500.9 3.700-3.300-2-3.300 2 .9-3.700-2.900-2.500 3.800-.3z" />
      <path d="M138 104l1.500 3.400 3.800.3-2.900 2.500.9 3.700-3.300-2-3.300 2 .9-3.700-2.900-2.500 3.800-.3z" />
      <path d="M167 102l1.500 3.400 3.800.3-2.900 2.500.9 3.700-3.300-2-3.300 2 .9-3.700-2.900-2.500 3.800-.3z" />
      <path d="M144 120l1.500 3.400 3.800.3-2.900 2.500.9 3.700-3.300-2-3.300 2 .9-3.700-2.900-2.500 3.800-.3z" />
      <path d="M161 119l1.500 3.400 3.800.3-2.900 2.500.9 3.700-3.300-2-3.300 2 .9-3.700-2.900-2.500 3.800-.3z" />
    </g>
  </svg>
);

const FamilyLogo = () => (
  <svg width="60" height="40" viewBox="699 77 180 120" fill="none" stroke="#fff" strokeLinecap="round" strokeLinejoin="round">
    <g strokeWidth="6">
      <circle cx="749" cy="95" r="11" />
      <circle cx="797" cy="95" r="11" />
      <circle cx="719" cy="114" r="8" />
      <circle cx="838" cy="134" r="9" />
      <circle cx="735" cy="131" r="8" />
    </g>
    <path d="M714 126Q716 137 727 140M748 119Q762 117 768 124L777 124Q784 115 797 115Q812 116 816 142M823 150Q829 156 838 155Q849 156 855 149" strokeWidth="7" />
    <path d="M744 115H758Q763 117 763 125L767 160H758V178H748V162H743V178H733V160H727L733 143Q747 142 745 128Z" fill="#fff" stroke="none" />
    <path d="M783 117H810V150L807 178H800V148H794V178H784Z" fill="#fff" stroke="none" />
    <path d="M828 151H848L850 177H842L838 167L835 177H827Z" fill="#fff" stroke="none" />
    <path d="M707 181H866" strokeWidth="5.500" />
    <circle cx="707" cy="181" r="8" fill="#fff" stroke="none" />
    <circle cx="866" cy="181" r="8" fill="#fff" stroke="none" />
  </svg>
);

const Broadcast = () => (
  <svg width="18" height="14" viewBox="0 0 18 14" fill="none" stroke="#fff" strokeWidth="1.700" strokeLinecap="round">
    <circle cx="9" cy="6.500" r="1.900" fill="#fff" stroke="none" />
    <path d="M5.800 3.200Q3.600 6.500 5.800 9.800M12.200 3.200Q14.400 6.500 12.200 9.800M3 1.300Q-.6 6.500 3 11.700M15 1.300Q18.600 6.500 15 11.700" />
  </svg>
);

const Rocket = () => (
  <svg width="24" height="24" viewBox="0 0 24 24" fill="none" stroke="#4d83d2" strokeWidth="1.250" strokeLinejoin="round">
    <path d="M22 1.500Q23.200 1.200 23.100 2.600Q22.600 12 16.200 20.800Q13.900 24 12.700 22L11 18.500C10.800 16.500 10.300 15 8.800 14.200C7 13.200 4.500 13.300 2 12.300Q.4 11.400 2.300 9.600Q10.500 3.300 22 1.500Z" />
    <circle cx="14.700" cy="9.800" r="3.100" />
  </svg>
);

const Pencil = () => (
  <svg width="24" height="24" viewBox="0 0 24 24" fill="none" stroke="#dc2f49" strokeWidth="1.500" strokeLinejoin="round" strokeLinecap="round">
    <path d="M1.200 22.800L2.600 15.200L15.600 2.200Q18.300-.3 20.900 2.100Q24.200 5.200 21.900 8.300L8.900 21.300Z" />
    <path d="M14.200 3.700L20.400 9.900M16.400 6Q18 3.900 20 4.400M2.700 15.200L6 15.800L6.200 18L8.500 18.400L8.900 21.300M8.800 15.200L15.300 8.700M1.200 22.800L4.500 22" />
  </svg>
);

const Funnel = () => (
  <svg width="20" height="20" viewBox="0 0 20 20" fill="#fff">
    <path d="M1.300.800H18.700Q19.700.800 19.200 2L12.400 10V18.500Q12.400 19.300 11.600 19.300H8.400Q7.600 19.300 7.600 18.500V10L.8 2Q.3.800 1.300.800Z" />
  </svg>
);

const Island = () => (
  <svg width="32" height="22" viewBox="2 0 96 66" fill="#e5343a">
    <path d="M5 50L3 40L6 32L12 25L17 22L17 15L22 12L25 7L31 7L36 10L42 3L48 2L54 5L56 11L64 9L71 12L74 18L82 20L88 18L94 25L95 31L90 36L82 35L75 34L68 37L64 43L57 42L50 45L45 42L42 46L37 43L34 37L29 36L26 32L20 35L14 33L9 37L8 44L8 50Z" />
    <path d="M14 40L23 37L27 40L24 44L16 46ZM29 43L33 41L33 45L30 47ZM20 49L27 49L26 52ZM33 54L37 54L35 58ZM42 49L47 48L44 51ZM25 57L28 56L27 59Z" />
  </svg>
);

export default function App() {
  return (
    <>
      <Global />
      <Page>
        <BaseMap />
        <Header>
          <HeartLogo />
          <NdpText>TOGETHER<br />A STRONGER SINGAPORE<br />NDP 2020</NdpText>
          <HeaderRule />
          <FamilyLogo />
          <MolText>MOMENTS OF LIFE</MolText>
          <LiveButton>
            <Broadcast />
            <LiveTag>LIVE</LiveTag>
          </LiveButton>
        </Header>

        <Dialog>
          <Banner>
            <BannerArt width="556" height="164" viewBox="0 0 556 164">
              <defs>
                <linearGradient id="plum" gradientUnits="userSpaceOnUse" x1="-10" y1="0" x2="82" y2="0">
                  <stop offset="0" stopColor="#b3397c" />
                  <stop offset=".45" stopColor="#95328c" />
                  <stop offset="1" stopColor="#86308e" />
                </linearGradient>
                <linearGradient id="coral" gradientUnits="userSpaceOnUse" x1="490" y1="60" x2="556" y2="0">
                  <stop offset=".2" stopColor="#f0605a" />
                  <stop offset="1" stopColor="#ee3b59" />
                </linearGradient>
              </defs>
              <g strokeWidth="22.500" strokeLinecap="round">
                <path stroke="url(#plum)" d="M-20 137L26 89M-12 182L34 132.500M30 186L80.500 135.500" />
                <path stroke="url(#coral)" d="M501.500 6L541 -36M507 49L567 -15" />
                <path stroke="#f0605a" d="M555.500 52L600 5" />
              </g>
            </BannerArt>
            <Title>Send your birthday wishes for Singapore</Title>
          </Banner>
          <Field $height={155} $top={27}>Write something here</Field>
          <Counter>280 characters remaining</Counter>
          <Field $height={62} $top={16}>Street name or postal code<Rocket /></Field>
          <Field $height={62} $top={18}>Name</Field>
          <RememberRow>Remember me<Toggle /></RememberRow>
          <Actions>
            <Action>Cancel</Action>
            <Action $muted>Post</Action>
          </Actions>
          <Notice>
            <strong>Messages can be viewed by anyone who clicks on the location pin in the map.</strong><br />
            Do not use any form of profanities, harassment or hate-speech.
          </Notice>
          <Terms>
            By clicking on <strong>‘Post a wish’</strong>, I give permission for my name, wish and location (as provided in my wish)<br />
            to be published on <strong>[insert name of NDP feature]</strong>. I also confirm that my wish does not contain<br />
            material that is inappropriate, hateful, obscene, or defamatory.
          </Terms>
        </Dialog>

        <BottomBar>
          <FilterButton><Funnel /></FilterButton>
          <WishButton><Pencil />Post a wish</WishButton>
        </BottomBar>

        <MapControls>
          <ControlCard><ControlButton><Island /></ControlButton></ControlCard>
          <ControlCard><ControlButton><Rocket /></ControlButton></ControlCard>
          <ControlCard>
            <ControlButton $ruled>
              <svg width="14" height="14"><path d="M0 7H14M7 0V14" stroke="#555759" strokeWidth="2.800" /></svg>
            </ControlButton>
            <ControlButton>
              <svg width="14" height="14"><path d="M0 7H14" stroke="#555759" strokeWidth="2.800" /></svg>
            </ControlButton>
          </ControlCard>
        </MapControls>
      </Page>
    </>
  );
}
